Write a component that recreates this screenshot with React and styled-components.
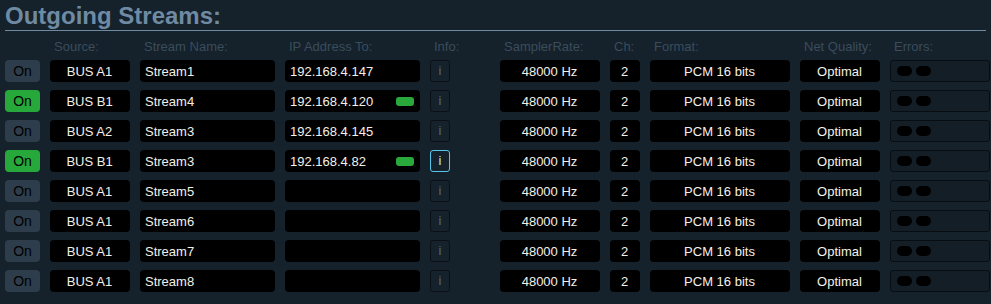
import React from 'react'
import styled, { createGlobalStyle } from 'styled-components'

const GlobalStyle = createGlobalStyle`
  body {
    margin: 0;
    background: #15212b;
    font-family: 'Liberation Sans', Arial, sans-serif;
  }
`

const streams = [
  { on: false, source: 'BUS A1', name: 'Stream1', ip: '192.168.4.147' },
  { on: true, source: 'BUS B1', name: 'Stream4', ip: '192.168.4.120', link: true },
  { on: false, source: 'BUS A2', name: 'Stream3', ip: '192.168.4.145' },
  { on: true, source: 'BUS B1', name: 'Stream3', ip: '192.168.4.82', link: true, info: true },
  { on: false, source: 'BUS A1', name: 'Stream5', ip: '' },
  { on: false, source: 'BUS A1', name: 'Stream6', ip: '' },
  { on: false, source: 'BUS A1', name: 'Stream7', ip: '' },
  { on: false, source: 'BUS A1', name: 'Stream8', ip: '' },
]

const labels = ['', 'Source:', 'Stream Name:', 'IP Address To:', 'Info:', 'SamplerRate:', 'Ch:', 'Format:', 'Net Quality:', 'Errors:']

function App() {
  return (
    <Panel>
      <GlobalStyle />
      <Title>Outgoing Streams:</Title>
      <HeaderRow>
        {labels.map((l, i) => <Label key={i}>{l}</Label>)}
      </HeaderRow>
      <Rows>
        {streams.map((s, i) => (
          <Row key={i}>
            <OnButton $on={s.on}>On</OnButton>
            <Field $center>{s.source}</Field>
            <Field>{s.name}</Field>
            <Field>
              {s.ip}
              {s.link && <LinkLed />}
            </Field>
            <InfoButton $active={s.info}>i</InfoButton>
            <Field $center>48000 Hz</Field>
            <Field $center>2</Field>
            <Field $center>PCM 16 bits</Field>
            <Field $center>Optimal</Field>
            <ErrorBox>
              <Dot />
              <Dot />
            </ErrorBox>
          </Row>
        ))}
      </Rows>
    </Panel>
  )
}

const Panel = styled.div`
  padding: 0 5px;
  width: 981px;
`

const Title = styled.h1`
  margin: 0;
  padding-top: 2px;
  height: 31px;
  box-sizing: border-box;
  line-height: 28px;
  font-size: 24px;
  font-weight: 700;
  color: #6f8ba3;
  border-bottom: 1px solid #6f8ba3;
`

const grid = `
  display: grid;
  grid-template-columns: 35px 80px 135px 135px 60px 100px 30px 140px 80px 100px;
  column-gap: 10px;
`

const HeaderRow = styled.div`
  ${grid}
  padding: 8px 0 5px;
`

const Label = styled.div`
  padding-left: 4px;
  font-size: 13px;
  line-height: 16px;
  color: #3a4d5c;
  white-space: nowrap;
`

const Rows = styled.div`
  display: flex;
  flex-direction: column;
  gap: 8px;
`

const Row = styled.div`
  ${grid}
  height: 22px;
`

const OnButton = styled.span`
  display: block;
  border-radius: 4px;
  background-color: ${p => (p.$on ? '#27a83b' : '#2e3d4c')};
  color: #000000;
  font-size: 14px;
  line-height: 22px;
  text-align: center;
`

const Field = styled.div`
  display: flex;
  align-items: center;
  justify-content: ${p => (p.$center ? 'center' : 'space-between')};
  padding: 0 6px 0 5px;
  background: #000;
  border-radius: 4px;
  color: #f4f1e8;
  font-size: 13px;
  white-space: nowrap;
`

const LinkLed = styled.span`
  width: 18px;
  height: 9px;
  border-radius: 3px;
  background: #29a93b;
`

const InfoButton = styled.div`
  width: 20px;
  box-sizing: border-box;
  border: 1px solid ${p => (p.$active ? '#58c6e8' : '#0a1016')};
  border-radius: 3px;
  color: ${p => (p.$active ? '#bfe8f6' : '#566776')};
  font-size: 13px;
  line-height: 20px;
  text-align: center;
`

const ErrorBox = styled.div`
  display: flex;
  align-items: center;
  gap: 4px;
  padding-left: 6px;
  box-sizing: border-box;
  border: 1px solid #080d12;
  border-radius: 3px;
  background: #131e27;
`

const Dot = styled.span`
  width: 15px;
  height: 10px;
  border-radius: 5px;
  background: #000;
`

export default App
